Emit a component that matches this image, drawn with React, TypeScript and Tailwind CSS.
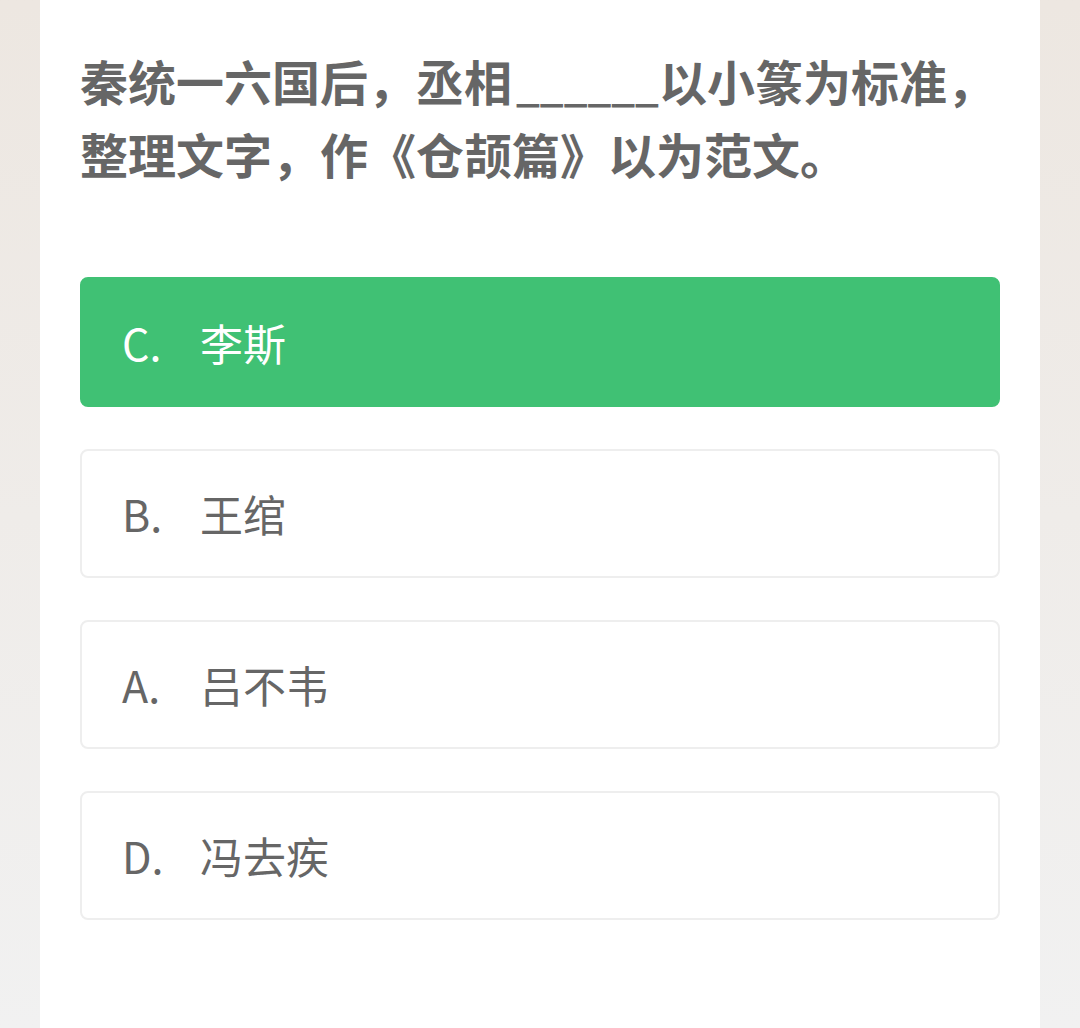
const options = [
  { key: "C", text: "李斯", selected: true },
  { key: "B", text: "王绾", selected: false },
  { key: "A", text: "吕不韦", selected: false },
  { key: "D", text: "冯去疾", selected: false },
];

export default function App() {
  return (
    <div
      className="min-h-[1028px] w-full bg-gradient-to-b from-[#ede7e1] to-[#f1f1f1]"
      style={{ fontFamily: '"Noto Sans CJK SC", "Noto Sans", sans-serif' }}
    >
      <div className="mx-auto w-[1000px] min-h-[1028px] bg-white px-10 pt-[44px]">
        <h1 className="text-[48px] font-bold leading-[73px] text-[#666666]">
          秦统一六国后，丞相
          <span className="ml-[4px] text-[42px] leading-none">______</span>
          以小篆为标准，整理文字，作《仓颉篇》以为范文。
        </h1>

        {/* options, C is the picked one */}
        <div className="mt-[87px] flex flex-col gap-[42px]">
          {options.map((o) => (
            <div
              key={o.key}
              className={
                o.selected
                  ? "flex h-[130px] items-center rounded-lg border-2 border-[#40c174] bg-[#40c174] px-10 text-[43px] text-white"
                  : "flex h-[129px] items-center rounded-lg border-2 border-[#eeeeee] bg-white px-10 text-[43px] text-[#666666]"
              }
            >
              <span className="w-[78px]">{o.key}.</span>
              <span>{o.text}</span>
            </div>
          ))}
        </div>
      </div>
    </div>
  );
}
